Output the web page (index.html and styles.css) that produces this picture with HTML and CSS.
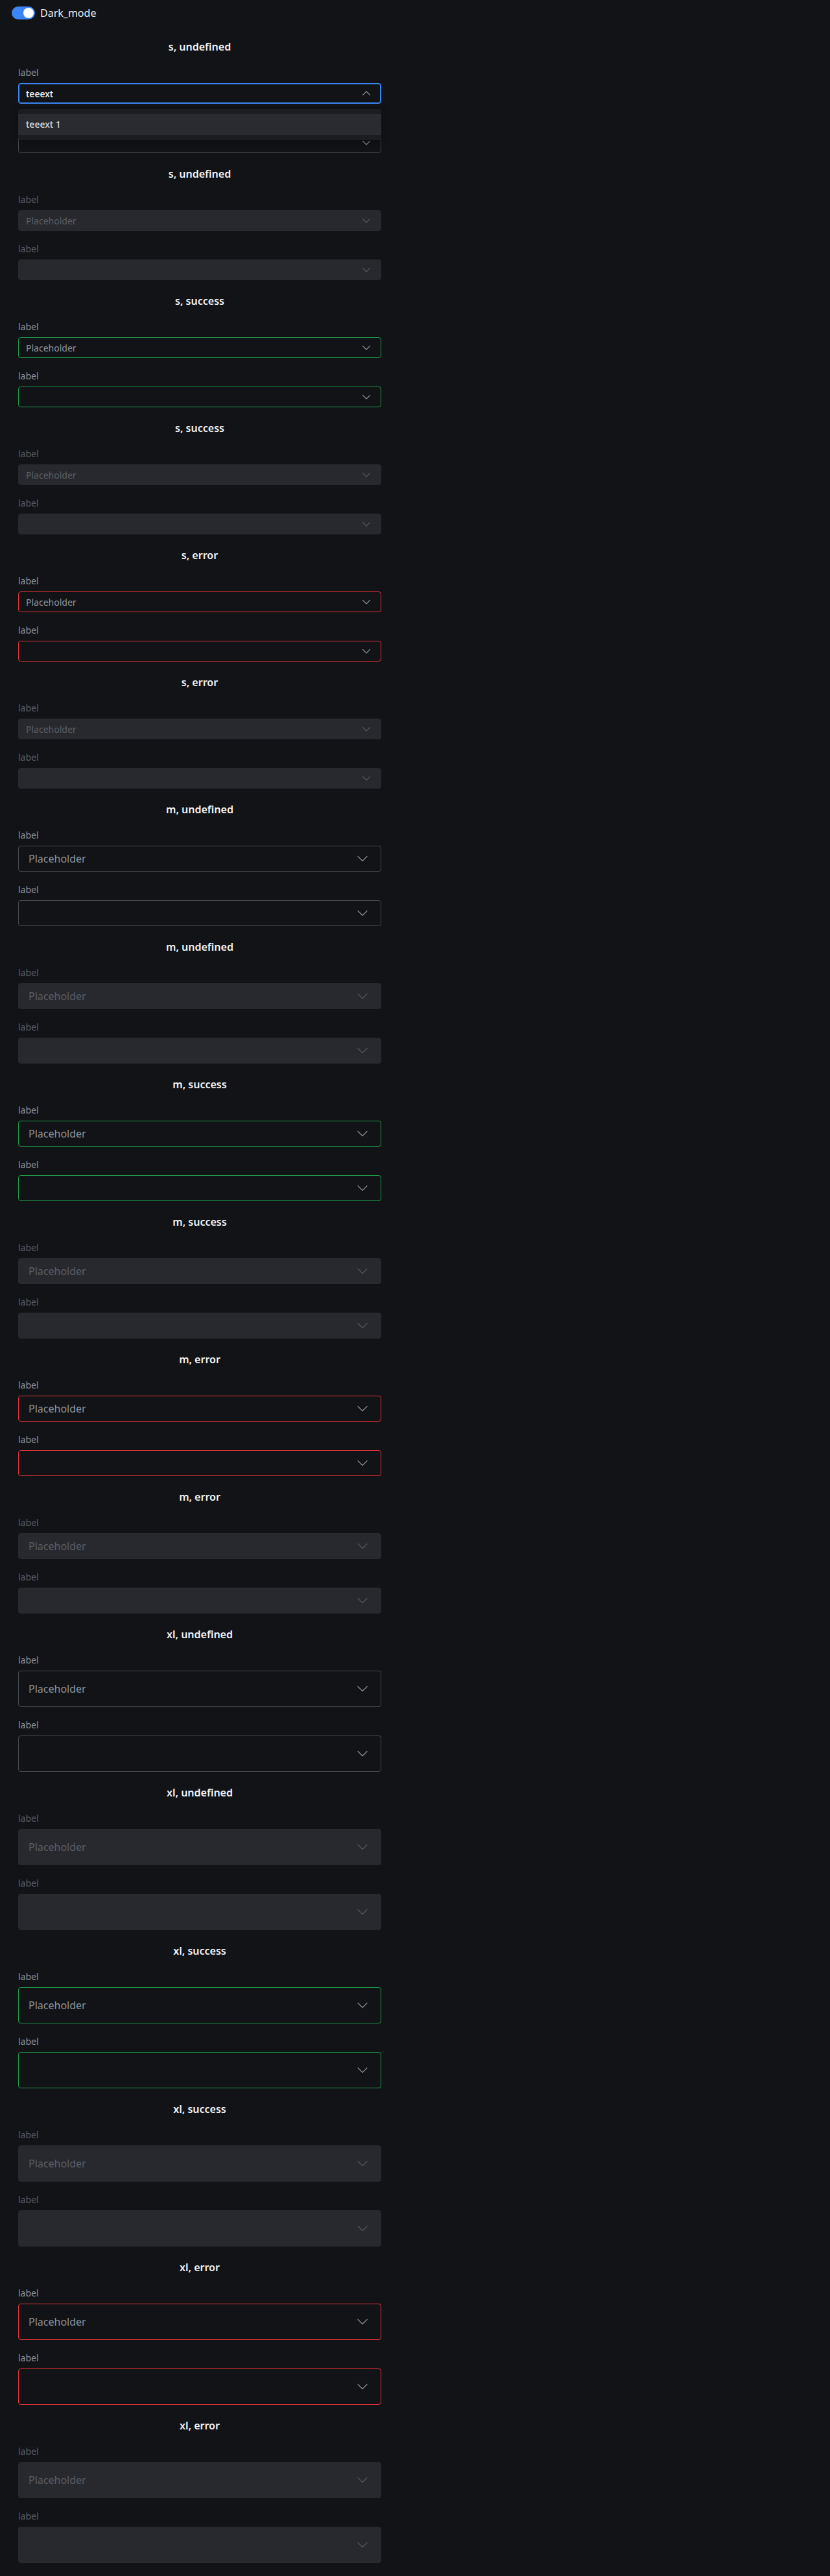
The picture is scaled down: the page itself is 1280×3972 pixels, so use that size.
FILE: index.html
```html
<!DOCTYPE html>
<html lang="en">
<head>
<meta charset="utf-8">
<title>Select – dark mode</title>
<link rel="stylesheet" href="styles.css">
</head>
<body>
<header class="topbar">
  <span class="toggle"><span class="toggle-knob"></span></span>
  <span class="toggle-label">Dark_mode</span>
</header>
<main class="list">

  <section class="group">
    <h2 class="group-title">s, undefined</h2>
    <div class="field">
      <div class="field-label">label</div>
      <div class="select size-s is-open"><span class="select-value">teeext</span><svg class="chev chev-up" viewBox="0 0 12 12"><path d="M0.5 3.5 L6 9 L11.5 3.5"/></svg></div>
      <div class="menu"><div class="menu-item">teeext 1</div></div>
    </div>
    <div class="field">
      <div class="field-label">label</div>
      <div class="select size-s"><span class="select-value"></span><svg class="chev" viewBox="0 0 12 12"><path d="M0.5 3.5 L6 9 L11.5 3.5"/></svg></div>
    </div>
  </section>

  <section class="group is-disabled">
    <h2 class="group-title">s, undefined</h2>
    <div class="field">
      <div class="field-label">label</div>
      <div class="select size-s"><span class="select-placeholder">Placeholder</span><svg class="chev" viewBox="0 0 12 12"><path d="M0.5 3.5 L6 9 L11.5 3.5"/></svg></div>
    </div>
    <div class="field">
      <div class="field-label">label</div>
      <div class="select size-s"><span class="select-value"></span><svg class="chev" viewBox="0 0 12 12"><path d="M0.5 3.5 L6 9 L11.5 3.5"/></svg></div>
    </div>
  </section>

  <section class="group is-success">
    <h2 class="group-title">s, success</h2>
    <div class="field">
      <div class="field-label">label</div>
      <div class="select size-s"><span class="select-placeholder">Placeholder</span><svg class="chev" viewBox="0 0 12 12"><path d="M0.5 3.5 L6 9 L11.5 3.5"/></svg></div>
    </div>
    <div class="field">
      <div class="field-label">label</div>
      <div class="select size-s"><span class="select-value"></span><svg class="chev" viewBox="0 0 12 12"><path d="M0.5 3.5 L6 9 L11.5 3.5"/></svg></div>
    </div>
  </section>

  <section class="group is-disabled">
    <h2 class="group-title">s, success</h2>
    <div class="field">
      <div class="field-label">label</div>
      <div class="select size-s"><span class="select-placeholder">Placeholder</span><svg class="chev" viewBox="0 0 12 12"><path d="M0.5 3.5 L6 9 L11.5 3.5"/></svg></div>
    </div>
    <div class="field">
      <div class="field-label">label</div>
      <div class="select size-s"><span class="select-value"></span><svg class="chev" viewBox="0 0 12 12"><path d="M0.5 3.5 L6 9 L11.5 3.5"/></svg></div>
    </div>
  </section>

  <section class="group is-error">
    <h2 class="group-title">s, error</h2>
    <div class="field">
      <div class="field-label">label</div>
      <div class="select size-s"><span class="select-placeholder">Placeholder</span><svg class="chev" viewBox="0 0 12 12"><path d="M0.5 3.5 L6 9 L11.5 3.5"/></svg></div>
    </div>
    <div class="field">
      <div class="field-label">label</div>
      <div class="select size-s"><span class="select-value"></span><svg class="chev" viewBox="0 0 12 12"><path d="M0.5 3.5 L6 9 L11.5 3.5"/></svg></div>
    </div>
  </section>

  <section class="group is-disabled">
    <h2 class="group-title">s, error</h2>
    <div class="field">
      <div class="field-label">label</div>
      <div class="select size-s"><span class="select-placeholder">Placeholder</span><svg class="chev" viewBox="0 0 12 12"><path d="M0.5 3.5 L6 9 L11.5 3.5"/></svg></div>
    </div>
    <div class="field">
      <div class="field-label">label</div>
      <div class="select size-s"><span class="select-value"></span><svg class="chev" viewBox="0 0 12 12"><path d="M0.5 3.5 L6 9 L11.5 3.5"/></svg></div>
    </div>
  </section>

  <section class="group">
    <h2 class="group-title">m, undefined</h2>
    <div class="field">
      <div class="field-label">label</div>
      <div class="select size-m"><span class="select-placeholder">Placeholder</span><svg class="chev" viewBox="0 0 16 16"><path d="M1 4.5 L8 11.5 L15 4.5"/></svg></div>
    </div>
    <div class="field">
      <div class="field-label">label</div>
      <div class="select size-m"><span class="select-value"></span><svg class="chev" viewBox="0 0 16 16"><path d="M1 4.5 L8 11.5 L15 4.5"/></svg></div>
    </div>
  </section>

  <section class="group is-disabled">
    <h2 class="group-title">m, undefined</h2>
    <div class="field">
      <div class="field-label">label</div>
      <div class="select size-m"><span class="select-placeholder">Placeholder</span><svg class="chev" viewBox="0 0 16 16"><path d="M1 4.5 L8 11.5 L15 4.5"/></svg></div>
    </div>
    <div class="field">
      <div class="field-label">label</div>
      <div class="select size-m"><span class="select-value"></span><svg class="chev" viewBox="0 0 16 16"><path d="M1 4.5 L8 11.5 L15 4.5"/></svg></div>
    </div>
  </section>

  <section class="group is-success">
    <h2 class="group-title">m, success</h2>
    <div class="field">
      <div class="field-label">label</div>
      <div class="select size-m"><span class="select-placeholder">Placeholder</span><svg class="chev" viewBox="0 0 16 16"><path d="M1 4.5 L8 11.5 L15 4.5"/></svg></div>
    </div>
    <div class="field">
      <div class="field-label">label</div>
      <div class="select size-m"><span class="select-value"></span><svg class="chev" viewBox="0 0 16 16"><path d="M1 4.5 L8 11.5 L15 4.5"/></svg></div>
    </div>
  </section>

  <section class="group is-disabled">
    <h2 class="group-title">m, success</h2>
    <div class="field">
      <div class="field-label">label</div>
      <div class="select size-m"><span class="select-placeholder">Placeholder</span><svg class="chev" viewBox="0 0 16 16"><path d="M1 4.5 L8 11.5 L15 4.5"/></svg></div>
    </div>
    <div class="field">
      <div class="field-label">label</div>
      <div class="select size-m"><span class="select-value"></span><svg class="chev" viewBox="0 0 16 16"><path d="M1 4.5 L8 11.5 L15 4.5"/></svg></div>
    </div>
  </section>

  <section class="group is-error">
    <h2 class="group-title">m, error</h2>
    <div class="field">
      <div class="field-label">label</div>
      <div class="select size-m"><span class="select-placeholder">Placeholder</span><svg class="chev" viewBox="0 0 16 16"><path d="M1 4.5 L8 11.5 L15 4.5"/></svg></div>
    </div>
    <div class="field">
      <div class="field-label">label</div>
      <div class="select size-m"><span class="select-value"></span><svg class="chev" viewBox="0 0 16 16"><path d="M1 4.5 L8 11.5 L15 4.5"/></svg></div>
    </div>
  </section>

  <section class="group is-disabled">
    <h2 class="group-title">m, error</h2>
    <div class="field">
      <div class="field-label">label</div>
      <div class="select size-m"><span class="select-placeholder">Placeholder</span><svg class="chev" viewBox="0 0 16 16"><path d="M1 4.5 L8 11.5 L15 4.5"/></svg></div>
    </div>
    <div class="field">
      <div class="field-label">label</div>
      <div class="select size-m"><span class="select-value"></span><svg class="chev" viewBox="0 0 16 16"><path d="M1 4.5 L8 11.5 L15 4.5"/></svg></div>
    </div>
  </section>

  <section class="group">
    <h2 class="group-title">xl, undefined</h2>
    <div class="field">
      <div class="field-label">label</div>
      <div class="select size-xl"><span class="select-placeholder">Placeholder</span><svg class="chev" viewBox="0 0 16 16"><path d="M1 4.5 L8 11.5 L15 4.5"/></svg></div>
    </div>
    <div class="field">
      <div class="field-label">label</div>
      <div class="select size-xl"><span class="select-value"></span><svg class="chev" viewBox="0 0 16 16"><path d="M1 4.5 L8 11.5 L15 4.5"/></svg></div>
    </div>
  </section>

  <section class="group is-disabled">
    <h2 class="group-title">xl, undefined</h2>
    <div class="field">
      <div class="field-label">label</div>
      <div class="select size-xl"><span class="select-placeholder">Placeholder</span><svg class="chev" viewBox="0 0 16 16"><path d="M1 4.5 L8 11.5 L15 4.5"/></svg></div>
    </div>
    <div class="field">
      <div class="field-label">label</div>
      <div class="select size-xl"><span class="select-value"></span><svg class="chev" viewBox="0 0 16 16"><path d="M1 4.5 L8 11.5 L15 4.5"/></svg></div>
    </div>
  </section>

  <section class="group is-success">
    <h2 class="group-title">xl, success</h2>
    <div class="field">
      <div class="field-label">label</div>
      <div class="select size-xl"><span class="select-placeholder">Placeholder</span><svg class="chev" viewBox="0 0 16 16"><path d="M1 4.5 L8 11.5 L15 4.5"/></svg></div>
    </div>
    <div class="field">
      <div class="field-label">label</div>
      <div class="select size-xl"><span class="select-value"></span><svg class="chev" viewBox="0 0 16 16"><path d="M1 4.5 L8 11.5 L15 4.5"/></svg></div>
    </div>
  </section>

  <section class="group is-disabled">
    <h2 class="group-title">xl, success</h2>
    <div class="field">
      <div class="field-label">label</div>
      <div class="select size-xl"><span class="select-placeholder">Placeholder</span><svg class="chev" viewBox="0 0 16 16"><path d="M1 4.5 L8 11.5 L15 4.5"/></svg></div>
    </div>
    <div class="field">
      <div class="field-label">label</div>
      <div class="select size-xl"><span class="select-value"></span><svg class="chev" viewBox="0 0 16 16"><path d="M1 4.5 L8 11.5 L15 4.5"/></svg></div>
    </div>
  </section>

  <section class="group is-error">
    <h2 class="group-title">xl, error</h2>
    <div class="field">
      <div class="field-label">label</div>
      <div class="select size-xl"><span class="select-placeholder">Placeholder</span><svg class="chev" viewBox="0 0 16 16"><path d="M1 4.5 L8 11.5 L15 4.5"/></svg></div>
    </div>
    <div class="field">
      <div class="field-label">label</div>
      <div class="select size-xl"><span class="select-value"></span><svg class="chev" viewBox="0 0 16 16"><path d="M1 4.5 L8 11.5 L15 4.5"/></svg></div>
    </div>
  </section>

  <section class="group is-disabled">
    <h2 class="group-title">xl, error</h2>
    <div class="field">
      <div class="field-label">label</div>
      <div class="select size-xl"><span class="select-placeholder">Placeholder</span><svg class="chev" viewBox="0 0 16 16"><path d="M1 4.5 L8 11.5 L15 4.5"/></svg></div>
    </div>
    <div class="field">
      <div class="field-label">label</div>
      <div class="select size-xl"><span class="select-value"></span><svg class="chev" viewBox="0 0 16 16"><path d="M1 4.5 L8 11.5 L15 4.5"/></svg></div>
    </div>
  </section>

</main>
</body>
</html>
```
FILE: styles.css
```css
* {
  box-sizing: border-box;
}

html,
body {
  margin: 0;
  padding: 0;
  background: #121317;
}

body {
  font-family: "Noto Sans", "Open Sans", "DejaVu Sans", sans-serif;
  color: #e9eaec;
}

/* ---------- top bar ---------- */
.topbar {
  display: flex;
  align-items: center;
  gap: 8px;
  padding: 10px 18px 0;
  height: 30px;
}

.toggle {
  position: relative;
  display: inline-block;
  width: 36px;
  height: 20px;
  border-radius: 10px;
  background: #3b86f7;
}

.toggle-knob {
  position: absolute;
  top: 2px;
  right: 2px;
  width: 16px;
  height: 16px;
  border-radius: 50%;
  background: #ffffff;
}

.toggle-label {
  font-size: 16px;
  line-height: 20px;
  color: #eceef1;
}

/* ---------- list ---------- */
.list {
  width: 560px;
  margin-left: 28px;
  padding-top: 30px;
}

.group {
  margin-bottom: 20px;
}

.group-title {
  margin: 0 0 18px;
  font-size: 16px;
  line-height: 24px;
  font-weight: 600;
  text-align: center;
  color: #f3f4f6;
}

.field {
  position: relative;
}

.field + .field {
  margin-top: 18px;
}

.field-label {
  font-size: 14px;
  line-height: 20px;
  margin-bottom: 6px;
  color: #8d939c;
}

/* ---------- select ---------- */
.select {
  display: flex;
  align-items: center;
  justify-content: space-between;
  width: 100%;
  border: 1px solid #46484f;
  border-radius: 4px;
  background: #121317;
}

.select-placeholder {
  color: #8d939c;
}

.select-value {
  color: #ffffff;
  font-weight: 500;
}

.chev {
  flex: none;
  fill: none;
  stroke: #8b8e96;
  stroke-width: 1.2;
  stroke-linecap: round;
  stroke-linejoin: round;
}

.chev-up {
  transform: rotate(180deg);
}

.size-s {
  height: 32px;
  padding: 0 16px 0 11px;
  font-size: 14px;
}

.size-s .chev {
  width: 12px;
  height: 12px;
}

.size-m {
  height: 40px;
  padding: 0 20px 0 15px;
  font-size: 16px;
}

.size-xl {
  height: 56px;
  padding: 0 20px 0 15px;
  font-size: 16px;
}

.size-m .chev,
.size-xl .chev {
  width: 16px;
  height: 16px;
}

.is-open {
  border-color: #3b86f7;
  box-shadow: inset 0 0 0 1px #3b86f7;
}

/* ---------- states ---------- */
.is-success .select {
  border-color: #1f9a4a;
}

.is-error .select {
  border-color: #e0343a;
}

.is-disabled .field-label {
  color: #5a5e66;
}

.is-disabled .select {
  border-color: #28292e;
  background: #28292e;
}

.is-disabled .select-placeholder {
  color: #5a5e66;
}

.is-disabled .chev {
  stroke: #53565d;
}

/* ---------- dropdown menu ---------- */
.menu {
  position: absolute;
  top: 66px;
  left: 0;
  right: 0;
  z-index: 5;
  padding: 8px 0;
  border-radius: 4px;
  background: #1c1d21;
  box-shadow: 0 4px 12px rgba(0, 0, 0, 0.35);
}

.menu-item {
  height: 32px;
  padding: 0 12px;
  font-size: 14px;
  line-height: 32px;
  font-weight: 500;
  color: #d8d9dc;
  background: #2a2b30;
}
```
